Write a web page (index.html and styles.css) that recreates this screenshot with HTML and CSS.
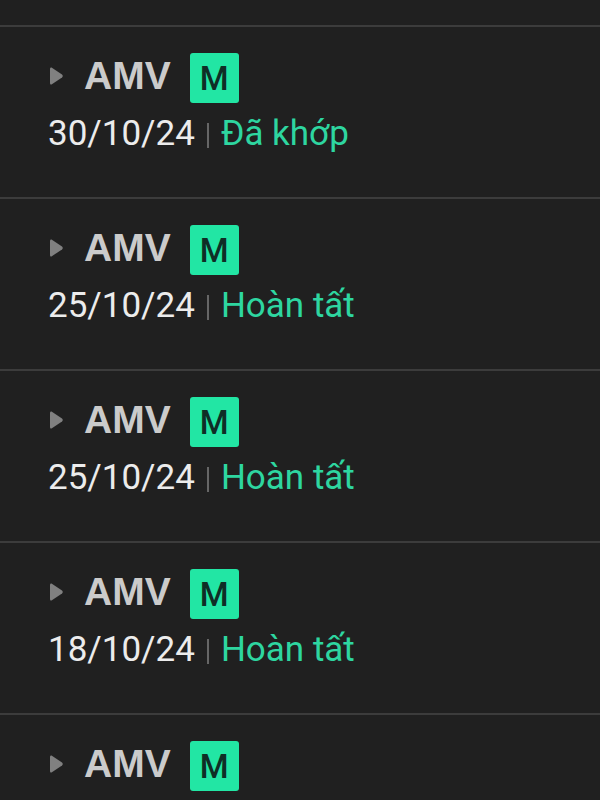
FILE: index.html
```html
<!DOCTYPE html>
<html>
<head>
<meta charset="utf-8">
<link rel="stylesheet" href="styles.css">
</head>
<body>
<div class="list">
  <div class="top"></div>
  <div class="row">
    <div class="line1"><svg class="tri" width="13" height="18" viewBox="0 0 13 18"><path d="M1.5 0.6 Q0 0 0 2 V16 Q0 18 1.5 17.4 L12 10.4 Q13.5 9 12 7.6 Z" fill="#808080"/></svg><span class="sym">AMV</span><span class="badge">M</span></div>
    <div class="line2"><span class="date">30/10/24</span><span class="sep"></span><span class="status">Đã khớp</span></div>
  </div>
  <div class="row">
    <div class="line1"><svg class="tri" width="13" height="18" viewBox="0 0 13 18"><path d="M1.5 0.6 Q0 0 0 2 V16 Q0 18 1.5 17.4 L12 10.4 Q13.5 9 12 7.6 Z" fill="#808080"/></svg><span class="sym">AMV</span><span class="badge">M</span></div>
    <div class="line2"><span class="date">25/10/24</span><span class="sep"></span><span class="status">Hoàn tất</span></div>
  </div>
  <div class="row">
    <div class="line1"><svg class="tri" width="13" height="18" viewBox="0 0 13 18"><path d="M1.5 0.6 Q0 0 0 2 V16 Q0 18 1.5 17.4 L12 10.4 Q13.5 9 12 7.6 Z" fill="#808080"/></svg><span class="sym">AMV</span><span class="badge">M</span></div>
    <div class="line2"><span class="date">25/10/24</span><span class="sep"></span><span class="status">Hoàn tất</span></div>
  </div>
  <div class="row">
    <div class="line1"><svg class="tri" width="13" height="18" viewBox="0 0 13 18"><path d="M1.5 0.6 Q0 0 0 2 V16 Q0 18 1.5 17.4 L12 10.4 Q13.5 9 12 7.6 Z" fill="#808080"/></svg><span class="sym">AMV</span><span class="badge">M</span></div>
    <div class="line2"><span class="date">18/10/24</span><span class="sep"></span><span class="status">Hoàn tất</span></div>
  </div>
  <div class="row last">
    <div class="line1"><svg class="tri" width="13" height="18" viewBox="0 0 13 18"><path d="M1.5 0.6 Q0 0 0 2 V16 Q0 18 1.5 17.4 L12 10.4 Q13.5 9 12 7.6 Z" fill="#808080"/></svg><span class="sym">AMV</span><span class="badge">M</span></div>
  </div>
</div>
</body>
</html>
```
FILE: styles.css
```css
html, body {
  margin: 0;
  padding: 0;
  background: #202020;
  width: 600px;
  height: 800px;
  overflow: hidden;
  font-family: Roboto, "Liberation Sans", sans-serif;
}
.list {
  display: flex;
  flex-direction: column;
  height: 800px;
  overflow: hidden;
}
.top {
  height: 25px;
  flex: none;
}
.row {
  flex: none;
  height: 170px;
  border-top: 2px solid #3c3c3c;
  padding-left: 50px;
  display: flex;
  flex-direction: column;
}
.row.last {
  height: 85px;
}
.line1 {
  display: flex;
  align-items: center;
  height: 50px;
  margin-top: 26px;
}
.tri {
  flex: none;
  margin-right: 21px;
  margin-top: -4px;
}
.sym {
  font-family: "Liberation Sans", Arial, sans-serif;
  font-size: 39px;
  font-weight: 700;
  color: #cbcbcb;
  line-height: 50px;
  margin-top: -4px;
}
.badge {
  width: 49px;
  height: 50px;
  margin-left: 19px;
  background: #22e6a4;
  border-radius: 3px;
  color: #0f2e26;
  font-size: 33px;
  font-weight: 500;
  display: flex;
  align-items: center;
  justify-content: center;
}
.line2 {
  display: flex;
  align-items: center;
  margin-top: 11px;
  margin-left: -2px;
  height: 40px;
}
.date {
  font-size: 35px;
  color: #ececec;
  line-height: 40px;
}
.sep {
  width: 2px;
  height: 25px;
  background: #666666;
  margin: 2px 12px 0 12px;
}
.status {
  font-size: 35px;
  color: #2ed6a0;
  line-height: 40px;
}
```
